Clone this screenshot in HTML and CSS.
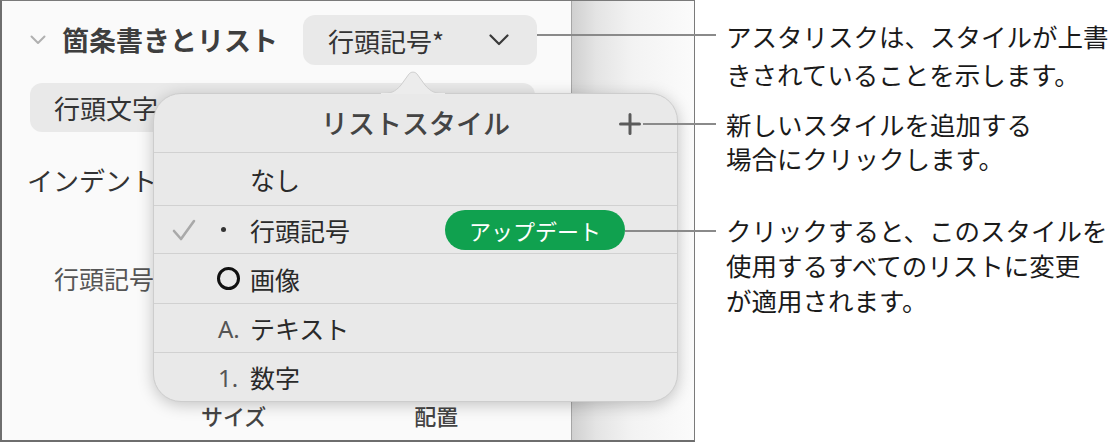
FILE: index.html
```html
<!DOCTYPE html>
<html lang="ja">
<head>
<meta charset="utf-8">
<link rel="stylesheet" href="styles.css">
</head>
<body>
<div class="page">
  <div class="shot">
    <div class="sidebar">
      <div class="sec-head">
        <svg class="disclosure" width="16" height="10" viewBox="0 0 16 10"><path d="M1.5 1.5 L8 8 L14.5 1.5" fill="none" stroke="#b0b0b0" stroke-width="2" stroke-linecap="round" stroke-linejoin="round"/></svg>
        <span class="sec-title">箇条書きとリスト</span>
        <div class="popup-btn">
          <span>行頭記号*</span>
          <svg class="popup-chev" width="20" height="12" viewBox="0 0 20 12"><path d="M1.5 1.5 L10 10 L18.5 1.5" fill="none" stroke="#3a3a3a" stroke-width="2.2" stroke-linecap="round" stroke-linejoin="round"/></svg>
        </div>
      </div>
      <div class="field-box">行頭文字</div>
      <div class="label indent">インデント</div>
      <div class="label sub">行頭記号</div>
      <div class="foot"><span>サイズ</span><span>配置</span></div>
    </div>
    <div class="canvas"></div>
  </div>

  <div class="notes">
    <p class="note n1">アスタリスクは、スタイルが上書<br>きされていることを示します。</p>
    <p class="note n2">新しいスタイルを追加する<br>場合にクリックします。</p>
    <p class="note n3">クリックすると、このスタイルを<br>使用するすべてのリストに変更<br>が適用されます。</p>
  </div>

  <svg class="pop-arrow" width="64" height="26" viewBox="0 0 64 26"><path d="M0 25.5 C10 25.5 14 24 20 17 L28 6 C30 3.5 34 3.5 36 6 L44 17 C50 24 54 25.5 64 25.5 Z" fill="#ececec" stroke="#cfcfcf" stroke-width="1"/><rect x="0" y="25" width="64" height="2" fill="#ececec"/></svg>
  <div class="popover">
    <div class="pop-head">
      <span class="pop-title">リストスタイル</span>
      <svg class="plus" width="22" height="22" viewBox="0 0 22 22"><path d="M11 1.5 V20.5 M1.5 11 H20.5" stroke="#5a5a5a" stroke-width="3" stroke-linecap="round"/></svg>
    </div>
    <div class="row r1"><span class="chk"></span><span class="mk"></span><span class="lbl">なし</span></div>
    <div class="row r2">
      <span class="chk"><svg width="24" height="22" viewBox="0 0 24 22"><path d="M2 12 L9 20 L22 2" fill="none" stroke="#a9a9a9" stroke-width="2.6" stroke-linecap="round" stroke-linejoin="round"/></svg></span>
      <span class="mk"><span class="dot"></span></span><span class="lbl">行頭記号</span>
      <span class="pill">アップデート</span>
    </div>
    <div class="row r3"><span class="chk"></span><span class="mk"><span class="ring"></span></span><span class="lbl">画像</span></div>
    <div class="row r4"><span class="chk"></span><span class="mk num">A.</span><span class="lbl">テキスト</span></div>
    <div class="row r5"><span class="chk"></span><span class="mk num">1.</span><span class="lbl">数字</span></div>
  </div>

  <div class="leader l1"></div>
  <div class="leader l2"></div>
  <div class="leader l3"></div>
</div>
</body>
</html>
```

FILE: styles.css
```css
* { box-sizing: border-box; }
html, body { margin: 0; padding: 0; background: #ffffff; }
body {
  width: 1115px;
  height: 442px;
  overflow: hidden;
  font-family: "Noto Sans CJK JP", "Noto Sans", sans-serif;
  color: #1c1c1c;
}
.page {
  position: relative;
  display: flex;
  width: 1115px;
  height: 442px;
}
.shot {
  width: 695px;
  height: 442px;
  display: flex;
  border-top: 1px solid #7a7a7a;
  border-left: 2px solid #6e6e6e;
  border-right: 1px solid #7a7a7a;
  border-bottom: 2px solid #6e6e6e;
}
.sidebar {
  width: 570px;
  height: 100%;
  background: #fafafa;
  border-right: 1px solid #a6a6a6;
  padding-left: 28px;
  display: flex;
  flex-direction: column;
}
.canvas {
  flex: 1;
  background: linear-gradient(to right, #d0d0d0 0, #e4e4e4 20%, #f3f3f3 50%, #fbfbfb 100%);
}
.sec-head {
  margin-top: 14px;
  height: 50px;
  display: flex;
  align-items: center;
}
.disclosure { margin-right: 16px; flex: none; }
.sec-title {
  flex: 0 0 241px;
  font-size: 27px;
  font-weight: 600;
  color: #3e3e3e;
  line-height: 50px;
}
.popup-btn {
  width: 234px;
  height: 50px;
  border-radius: 12px;
  background: #e9e9e9;
  display: flex;
  align-items: center;
  padding-left: 25px;
  padding-right: 28px;
  font-size: 26px;
  color: #333;
}
.popup-chev { margin-left: auto; }
.field-box {
  margin-top: 18px;
  width: 505px;
  height: 49px;
  border-radius: 12px;
  background: #e9e9e9;
  padding-left: 24px;
  font-size: 26px;
  line-height: 49px;
  color: #333;
}
.label { font-size: 26px; line-height: 34px; color: #333; }
.indent { margin-top: 31px; margin-left: -3px; }
.sub { margin-top: 64px; margin-left: 24px; font-size: 25px; color: #555; }
.foot {
  margin-top: 106px;
  padding-left: 171px;
  display: flex;
  gap: 148px;
  font-size: 22px;
  font-weight: 500;
  line-height: 28px;
  color: #444;
}

/* callout texts */
.notes {
  padding-left: 31px;
  display: flex;
  flex-direction: column;
}
.note {
  margin: 0;
  font-size: 25.5px;
  color: #1a1a1a;
  white-space: nowrap;
}
.n1 { margin-top: 17px; line-height: 38px; }
.n2 { margin-top: 14px; line-height: 34px; }
.n3 { margin-top: 37px; line-height: 35px; }

/* popover (overlay) */
.popover {
  position: absolute;
  left: 153px;
  top: 93px;
  width: 525px;
  height: 309px;
  border-radius: 28px;
  background: #e9e9e9;
  border: 1px solid #cdcdcd;
  box-shadow: 0 3px 16px rgba(0, 0, 0, 0.22);
  display: flex;
  flex-direction: column;
  overflow: hidden;
}
.pop-arrow {
  position: absolute;
  left: 381px;
  top: 68px;
  z-index: 2;
}
.pop-head {
  position: relative;
  height: 58px;
  display: flex;
  align-items: center;
  justify-content: center;
  flex: none;
}
.pop-title {
  font-size: 27px;
  font-weight: 500;
  color: #444;
  line-height: 58px;
}
.plus {
  position: absolute;
  right: 36px;
  top: 19px;
}
.row {
  border-top: 1px solid #d1d1d1;
  display: flex;
  align-items: center;
  padding-left: 18px;
  padding-right: 52px;
  flex: none;
}
.r1 { height: 53px; }
.r2 { height: 48px; }
.r3 { height: 50px; }
.r4 { height: 49px; }
.r5 { flex: 1; }
.chk { width: 46px; display: flex; align-items: center; }
.mk {
  width: 32px;
  display: flex;
  align-items: center;
}
.dot {
  width: 5px;
  height: 5px;
  border-radius: 50%;
  background: #333;
  margin-left: 3px;
}
.ring {
  width: 23px;
  height: 23px;
  border-radius: 50%;
  border: 3.5px solid #111;
  margin-left: -1px;
}
.num { font-size: 24px; color: #555; font-family: "Noto Sans", sans-serif; }
.lbl { font-size: 25px; color: #2a2a2a; }
.pill {
  margin-left: auto;
  width: 180px;
  height: 40px;
  border-radius: 20px;
  background: #10a14f;
  color: #fff;
  font-size: 22px;
  display: flex;
  align-items: center;
  justify-content: center;
}

/* leader lines (annotations over the screenshot) */
.leader {
  position: absolute;
  height: 2px;
  background: #8a8a8a;
  z-index: 3;
}
.l1 { left: 537px; width: 179px; top: 34px; }
.l2 { left: 643px; width: 73px; top: 123px; }
.l3 { left: 625px; width: 91px; top: 230px; }
```
